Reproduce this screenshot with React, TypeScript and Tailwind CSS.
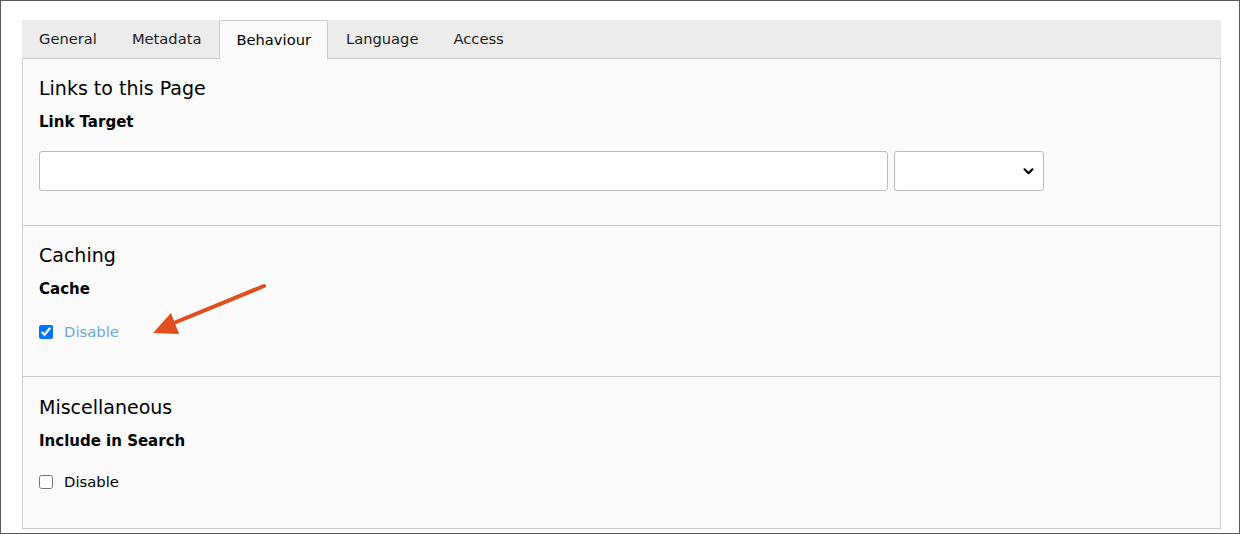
import { useState } from "react";

const font = { fontFamily: '"DejaVu Sans", Verdana, sans-serif' };

const tabs = ["General", "Metadata", "Behaviour", "Language", "Access"];

function Section({
  title,
  label,
  children,
  last,
}: {
  title: string;
  label: string;
  children: React.ReactNode;
  last?: boolean;
}) {
  return (
    <div className={last ? "px-4 pt-[19px] pb-[36px]" : "border-b border-[#cccccc] px-4 pt-[18px] pb-[34px]"}>
      <h2 className="text-[19px] leading-[22px] text-black">{title}</h2>
      <div className="mt-[13px] text-[15px] font-bold leading-5 text-black">{label}</div>
      {children}
    </div>
  );
}

function CheckRow({ checked, onChange, gap }: { checked: boolean; onChange: () => void; gap: string }) {
  return (
    <label className={`${gap} flex h-5 items-center gap-[11px] text-[14.8px] leading-5`}>
      <input
        type="checkbox"
        checked={checked}
        onChange={onChange}
        className="m-0 h-[14px] w-[14px] accent-[#0075ff]"
      />
      <span className={checked ? "text-[#6fa8dc]" : "text-black"}>Disable</span>
    </label>
  );
}

export default function App() {
  const [cache, setCache] = useState(true);
  const [search, setSearch] = useState(false);

  return (
    <div
      style={font}
      className="relative h-[534px] w-[1240px] overflow-hidden border border-[#5a5a5a] bg-white pl-[21px] pr-[18px] pt-[19px]"
    >
      <div className="flex h-[39px] items-end rounded-tr-[3px] border-b border-[#cccccc] bg-[#ececec]">
        {tabs.map((t) => (
          <div
            key={t}
            className={
              t === "Behaviour"
                ? "-mb-px mr-px flex h-[39px] items-center rounded-t-[2px] border border-b-0 border-[#cccccc] bg-[#fafafa] px-4 text-[14.7px] text-black"
                : "mr-px flex h-[38px] items-center border border-transparent px-4 text-[14.7px] text-[#222]"
            }
          >
            {t}
          </div>
        ))}
      </div>

      <div className="border-x border-b border-[#cccccc] bg-[#fafafa]">
        <Section title="Links to this Page" label="Link Target">
          <div className="mt-[19px] flex gap-[6px]">
            <input
              type="text"
              className="h-[40px] w-[849px] rounded-[3px] border border-[#bbbbbb] bg-white px-2 outline-none"
            />
            <div className="relative h-[40px] w-[150px] rounded-[3px] border border-[#bbbbbb] bg-white">
              <svg
                viewBox="0 0 12 8"
                className="absolute right-[9px] top-[16px] h-[7px] w-[11px]"
                aria-hidden="true"
              >
                <path d="M1.5 1.5L6 6l4.5-4.5" fill="none" stroke="#000" strokeWidth="2.4" strokeLinecap="round" strokeLinejoin="round" />
              </svg>
            </div>
          </div>
        </Section>

        <Section title="Caching" label="Cache">
          <CheckRow gap="mt-[23px]" checked={cache} onChange={() => setCache((v) => !v)} />
        </Section>

        <Section title="Miscellaneous" label="Include in Search" last>
          <CheckRow gap="mt-[21px]" checked={search} onChange={() => setSearch((v) => !v)} />
        </Section>
      </div>

      <svg
        className="pointer-events-none absolute left-0 top-0"
        width="1240"
        height="534"
        viewBox="0 0 1240 534"
        aria-hidden="true"
      >
        <line x1="263" y1="285" x2="168" y2="324" stroke="#e04f1d" strokeWidth="4" strokeLinecap="round" />
        <polygon points="152,332 170,312 178,333" fill="#e04f1d" />
      </svg>
    </div>
  );
}
